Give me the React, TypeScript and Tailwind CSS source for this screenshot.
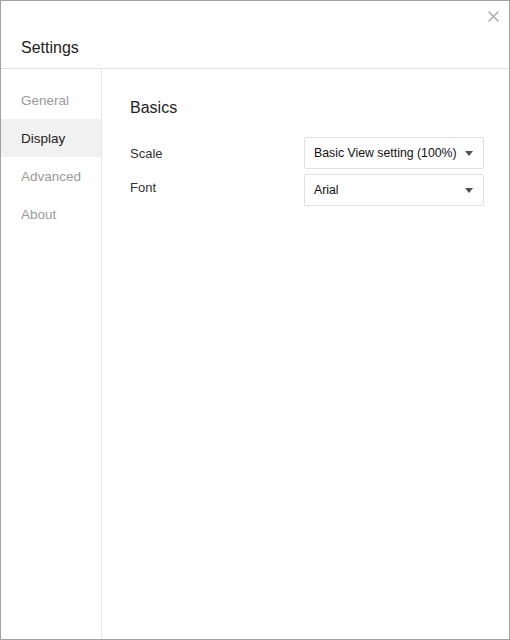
import { useState } from "react";

const sections = ["General", "Display", "Advanced", "About"];

const rows = [
  { label: "Scale", value: "Basic View setting (100%)", offset: "mt-[7px]" },
  { label: "Font", value: "Arial", offset: "mt-[4px]" },
];

function Caret() {
  return (
    <svg width="8" height="5" viewBox="0 0 8 5" className="shrink-0">
      <path d="M0 0 H8 L4 5 Z" fill="#505050" />
    </svg>
  );
}

export default function App() {
  const [active, setActive] = useState("Display");

  return (
    <div className="w-[510px] h-[640px] border border-[#a3a3a3] bg-white flex flex-col relative font-['Liberation_Sans',Arial,sans-serif] text-[#222]">
      {/* Close */}
      <button className="absolute top-[10px] right-[10px] w-[11px] h-[11px]" aria-label="Close">
        <svg width="11" height="11" viewBox="0 0 11 11">
          <path d="M0.5 0.5 L10.5 10.5 M10.5 0.5 L0.5 10.5" stroke="#a0a0a0" strokeWidth="1.1" />
        </svg>
      </button>

      {/* Header */}
      <div className="h-[68px] shrink-0 border-b border-[#e3e3e3] pl-5 pt-[37px]">
        <h1 className="text-[16px] leading-5 text-[#222]">Settings</h1>
      </div>

      <div className="flex flex-1">
        {/* Sidebar */}
        <nav className="w-[101px] shrink-0 border-r border-[#e6e6e6] pt-3">
          {sections.map((s) => (
            <div
              key={s}
              onClick={() => setActive(s)}
              className={`h-[38px] pl-5 pt-[2px] flex items-center text-[13.5px] cursor-pointer ${
                active === s ? "bg-[#f1f1f1] text-[#222]" : "text-[#9b9b9b]"
              }`}
            >
              {s}
            </div>
          ))}
        </nav>

        {/* Content */}
        <div className="flex-1 pl-[28px] pr-[25px] pt-[29px]">
          <h2 className="text-[16px] leading-5 text-[#222]">Basics</h2>
          <div className="mt-[19px] flex flex-col gap-[5px]">
            {rows.map((r) => (
              <div key={r.label} className="flex items-start justify-between">
                <span className={`text-[13px] leading-5 text-[#333] ${r.offset}`}>{r.label}</span>
                <div className="w-[180px] h-[32px] border border-[#e0e0e0] rounded-[2px] pl-[9px] pr-[10px] pt-[1px] flex items-center justify-between text-[12.3px] text-[#111]">
                  <span>{r.value}</span>
                  <Caret />
                </div>
              </div>
            ))}
          </div>
        </div>
      </div>
    </div>
  );
}
